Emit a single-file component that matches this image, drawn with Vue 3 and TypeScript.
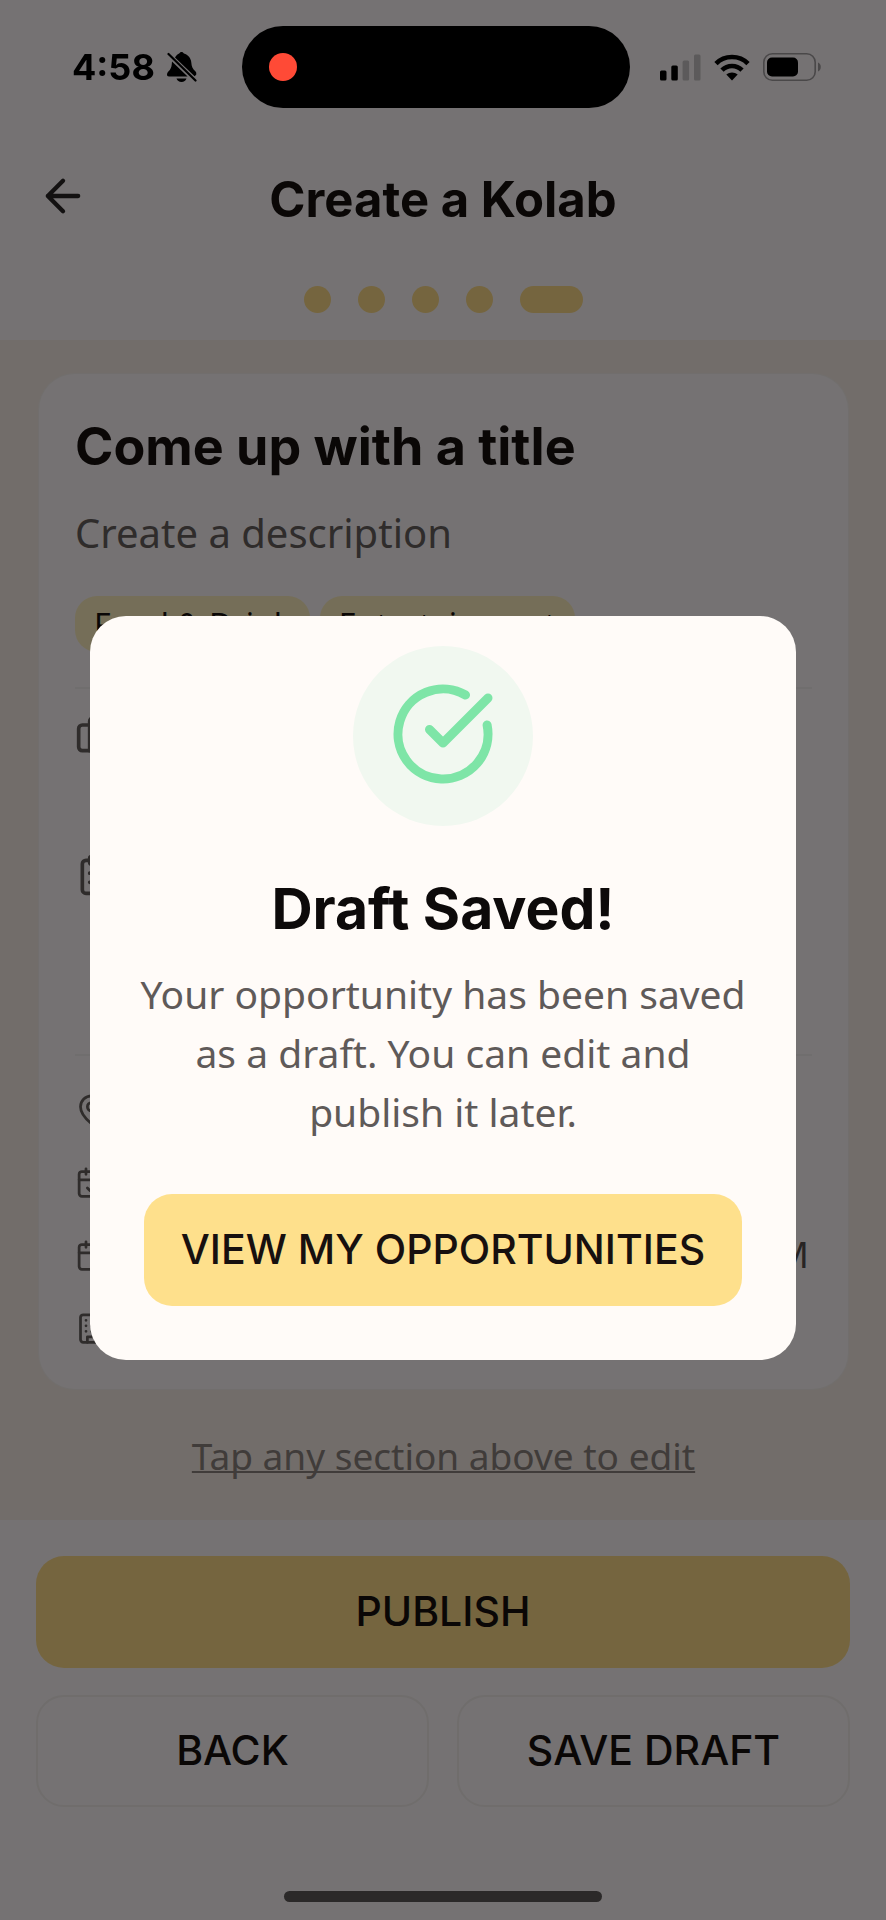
<script setup lang="ts">
interface DetailRow {
  icon: 'pin' | 'calendarCheck' | 'calendar' | 'building'
  value?: string
}

const steps: number[] = [1, 2, 3, 4, 5]
const currentStep = 5
const tags: string[] = ['Food & Drink', 'Entertainment']
const details: DetailRow[] = [
  { icon: 'pin' },
  { icon: 'calendarCheck' },
  { icon: 'calendar', value: 'PM' },
  { icon: 'building' },
]
</script>

<template>
  <div class="screen">
    <div class="status-bar">
      <div class="status-left">
        <span>4:58</span>
        <svg class="bell" viewBox="0 0 30 30" aria-hidden="true">
          <path d="M8 5.600C9.300 3.300 11 2 12.200 1.600C12.700.500 13.500 0 14.500 0C15.600 0 16.400.500 16.900 1.600C21 2.800 24 6.300 24.300 10.500C24.600 14.500 25.500 17 28.500 19.500C29.200 20.200 29.500 21.300 29.200 22.700L27.600 24.300Z" />
          <path d="M5 9.500L20.600 24.500H2C.500 24.500 0 23.500 0 22.500C0 20.500 1.500 19.500 2.800 18C4.700 15.500 4.700 13 5 9.500Z" />
          <path d="M9.500 26.500H19.500C18.700 28.800 17 30 14.500 30S10.300 28.800 9.500 26.500Z" />
          <path d="M1.500 2L28.500 28.500" fill="none" stroke="currentColor" stroke-width="2.200" stroke-linecap="round" />
        </svg>
      </div>
      <div class="island"><span class="recording"></span></div>
      <div class="status-right">
        <svg class="signal" viewBox="0 0 41 27" aria-hidden="true">
          <rect x="0" y="16.500" width="6.500" height="10" rx="1.500" />
          <rect x="11.300" y="11.500" width="6.500" height="15" rx="1.500" />
          <rect x="22.600" y="6.500" width="6.500" height="20" rx="1.500" class="faint" />
          <rect x="34" y="0.500" width="6.500" height="26" rx="1.500" class="faint" />
        </svg>
        <svg class="wifi" viewBox="0 0 36 27" aria-hidden="true">
          <g fill="none" stroke="currentColor" stroke-width="4.600">
            <path d="M2 9.600C10.500.800 25.500.800 34 9.600" />
            <path d="M8 16.200C13.500 10.600 22.500 10.600 28 16.200" />
          </g>
          <path d="M12.300 20.600C15.500 17.800 20.500 17.800 23.700 20.600L18 26.600Z" />
        </svg>
        <svg class="battery" viewBox="0 0 58 28" aria-hidden="true">
          <rect x="0.800" y="0.800" width="51.400" height="26.400" rx="8.500" fill="none" class="battery-line" />
          <rect x="4" y="4.500" width="31" height="19" rx="5" />
          <path d="M55 9.500C58.700 11 58.700 17 55 18.500Z" class="nub" />
        </svg>
      </div>
    </div>

    <header class="header">
      <div class="title-row">
        <button class="back-arrow" type="button" aria-label="Go back">
          <svg viewBox="0 0 24 24" aria-hidden="true"><path d="m12 19-7-7 7-7M19 12H5" /></svg>
        </button>
        <h1>Create a Kolab</h1>
      </div>
      <div class="steps">
        <span v-for="step in steps" :key="step" class="step" :class="{ current: step === currentStep }"></span>
      </div>
    </header>

    <main class="content">
      <section class="card">
        <h2>Come up with a title</h2>
        <p class="description">Create a description</p>
        <div class="tags">
          <span v-for="tag in tags" :key="tag" class="tag">{{ tag }}</span>
        </div>
        <div class="terms">
          <svg class="icon" viewBox="0 0 24 24" aria-hidden="true">
            <path d="M16 20V4a2 2 0 0 0-2-2h-4a2 2 0 0 0-2 2v16" />
            <rect x="2" y="6" width="20" height="14" rx="2" />
          </svg>
          <svg class="icon" viewBox="0 0 24 24" aria-hidden="true">
            <rect x="8" y="2" width="8" height="4" rx="1" />
            <path d="M16 4h2a2 2 0 0 1 2 2v14a2 2 0 0 1-2 2H6a2 2 0 0 1-2-2V6a2 2 0 0 1 2-2h2M12 11h4M12 16h4M8 11h.01M8 16h.01" />
          </svg>
        </div>
        <ul class="details">
          <li v-for="row in details" :key="row.icon">
            <svg class="icon small" viewBox="0 0 24 24" aria-hidden="true">
              <template v-if="row.icon === 'pin'">
                <path d="M20 10c0 5-5.500 10.200-7.400 11.800a1 1 0 0 1-1.200 0C9.500 20.200 4 15 4 10a8 8 0 0 1 16 0" />
                <circle cx="12" cy="10" r="3" />
              </template>
              <template v-else-if="row.icon === 'building'">
                <rect x="4" y="2" width="16" height="20" rx="2" />
                <path d="M9 22v-4h6v4M8 6h.01M16 6h.01M12 6h.01M12 10h.01M12 14h.01M16 10h.01M16 14h.01M8 10h.01M8 14h.01" />
              </template>
              <template v-else>
                <path d="M8 2v4M16 2v4M3 10h18" />
                <rect x="3" y="4" width="18" height="18" rx="2" />
                <path v-if="row.icon === 'calendarCheck'" d="m9 16 2 2 4-4" />
              </template>
            </svg>
            <span v-if="row.value">{{ row.value }}</span>
          </li>
        </ul>
      </section>
      <p class="hint">Tap any section above to edit</p>
    </main>

    <footer class="footer">
      <button class="btn gold" type="button">PUBLISH</button>
      <div class="pair">
        <button class="btn outline" type="button">BACK</button>
        <button class="btn outline" type="button">SAVE DRAFT</button>
      </div>
      <div class="home-indicator"></div>
    </footer>

    <div class="overlay">
      <div class="dialog" role="dialog" aria-modal="true" aria-labelledby="dialog-title">
        <div class="badge">
          <svg viewBox="0 0 24 24" aria-hidden="true">
            <path d="M21.801 10A10 10 0 1 1 17 3.335" />
            <path d="m9 11 3 3L22 4" />
          </svg>
        </div>
        <h2 id="dialog-title">Draft Saved!</h2>
        <p>Your opportunity has been saved as a draft. You can edit and publish it later.</p>
        <button class="btn gold" type="button">VIEW MY OPPORTUNITIES</button>
      </div>
    </div>
  </div>
</template>

<style>
body {
  margin: 0;
  background: #fef9fa;
}
</style>

<style scoped>
* {
  box-sizing: border-box;
}

h1,
h2,
p,
ul {
  margin: 0;
  padding: 0;
}

.screen {
  display: flex;
  flex-direction: column;
  min-height: 100vh;
  background: #fef9fa;
  color: #17100f;
  font-family: "Noto Sans", "Open Sans", sans-serif;
}

/* Status bar stays above the dimmed overlay */
.status-bar {
  position: relative;
  z-index: 20;
  display: flex;
  align-items: center;
  padding: 26px 65px 0 72px;
  color: #000;
}

.status-left,
.status-right {
  display: flex;
  align-items: center;
}

.status-left {
  gap: 12px;
  margin-right: 45px;
  font: 700 36px/40px Inter, sans-serif;
}

.status-right {
  gap: 13px;
  margin-left: auto;
}

.status-bar svg {
  fill: currentColor;
}

.bell {
  width: 30px;
  height: 30px;
}

.island {
  display: flex;
  align-items: center;
  flex: 0 1 388px;
  height: 82px;
  padding-left: 27px;
  border-radius: 41px;
  background: #000;
}

.recording {
  width: 28px;
  height: 28px;
  border-radius: 50%;
  background: #ff4a36;
}

.signal {
  width: 41px;
  height: 27px;
}

.faint {
  fill: #5c5a5b;
}

.wifi {
  width: 36px;
  height: 27px;
}

.battery {
  width: 58px;
  height: 28px;
}

.battery-line {
  stroke: #4a4849;
  stroke-width: 1.6;
}

.nub {
  fill: #4a4849;
}

.header {
  padding: 62px 37px 27px;
}

.title-row {
  display: grid;
  grid-template-columns: 52px 1fr 52px;
}

.title-row h1 {
  text-align: center;
  font: 700 49px/60px Inter, sans-serif;
}

.back-arrow {
  width: 52px;
  height: 52px;
  padding: 0;
  border: 0;
  background: none;
  color: #2a2526;
}

.back-arrow svg {
  display: block;
  width: 52px;
  height: 52px;
  fill: none;
  stroke: currentColor;
  stroke-width: 2;
  stroke-linecap: round;
  stroke-linejoin: round;
}

.steps {
  display: flex;
  justify-content: center;
  gap: 27px;
  margin-top: 56px;
}

.step {
  width: 27px;
  height: 27px;
  border-radius: 14px;
  background: #fedc89;
}

.step.current {
  width: 63px;
}

.content {
  flex: 1;
  padding: 34px 38px 35px 39px;
  background: #f8eee7;
}

.card {
  padding: 43px 36px 36px;
  border-radius: 36px;
  background: #fef9fa;
  box-shadow: 0 0 0 1px #f7f0ee;
}

.card h2 {
  font: 700 52px/60px Inter, sans-serif;
}

.description {
  margin-top: 28px;
  color: #67605f;
  font-size: 40px;
  line-height: 56px;
}

.tags {
  display: flex;
  gap: 10px;
  margin-top: 35px;
}

.tag {
  padding: 2px 19px 0;
  border-radius: 22px;
  background: #fef0c0;
  font-size: 32px;
  line-height: 54px;
}

.terms {
  display: flex;
  flex-direction: column;
  gap: 95px;
  margin-top: 35px;
  padding: 25px 0 157px;
  border-top: 2px solid #f5f0f0;
  border-bottom: 2px solid #f5f0f0;
}

.icon {
  width: 44px;
  height: 44px;
  fill: none;
  stroke: #67605f;
  stroke-width: 2;
  stroke-linecap: round;
  stroke-linejoin: round;
}

.icon.small {
  width: 33px;
  height: 33px;
}

.details {
  display: flex;
  flex-direction: column;
  gap: 23px;
  padding-top: 28px;
  list-style: none;
}

.details li {
  display: flex;
  align-items: center;
  justify-content: space-between;
  height: 50px;
  padding-right: 3px;
  color: #574f4f;
  font-size: 36px;
  line-height: 50px;
}

.hint {
  margin-top: 41px;
  color: #8d837e;
  font-size: 37px;
  line-height: 52px;
  text-align: center;
  text-decoration: underline;
  text-decoration-thickness: 2px;
  text-decoration-skip-ink: none;
}

.footer {
  padding: 36px 36px 18px;
}

.btn {
  display: block;
  width: 100%;
  height: 112px;
  padding: 0 0 3px;
  border: 0;
  border-radius: 28px;
  color: #17100f;
  font: 500 41px/48px Inter, sans-serif;
}

.gold {
  background: #fee08c;
}

.footer .gold {
  background: #fedc89;
}

.outline {
  border: 2px solid #f3edec;
  background: transparent;
}

.pair {
  display: grid;
  grid-template-columns: 1fr 1fr;
  gap: 28px;
  margin-top: 27px;
}

.home-indicator {
  width: 39%;
  height: 11px;
  margin: 84px auto 0;
  border-radius: 6px;
  background: #5f5a5b;
}

.overlay {
  position: fixed;
  inset: 0;
  z-index: 10;
  display: flex;
  align-items: center;
  justify-content: center;
  padding: 56px 90px 0;
  background: rgba(0, 0, 0, 0.54);
}

.dialog {
  width: 100%;
  padding: 30px 44px 54px;
  border-radius: 36px;
  background: #fffbf8;
  text-align: center;
}

.badge {
  display: flex;
  align-items: center;
  justify-content: center;
  width: 180px;
  height: 180px;
  margin: 0 auto;
  padding-bottom: 4px;
  border-radius: 50%;
  background: #f1f8f0;
}

.badge svg {
  width: 108px;
  height: 108px;
  fill: none;
  stroke: #7ee5a7;
  stroke-width: 2;
  stroke-linecap: round;
  stroke-linejoin: round;
}

.dialog h2 {
  margin-top: 53px;
  color: #0d0a0a;
  font: 700 57px/60px Inter, sans-serif;
}

.dialog p {
  margin-top: 25px;
  color: #5f5a59;
  font-size: 39px;
  line-height: 59px;
}

.dialog .btn {
  width: auto;
  min-width: calc(100% - 20px);
  margin: 53px 10px 0;
}
</style>
